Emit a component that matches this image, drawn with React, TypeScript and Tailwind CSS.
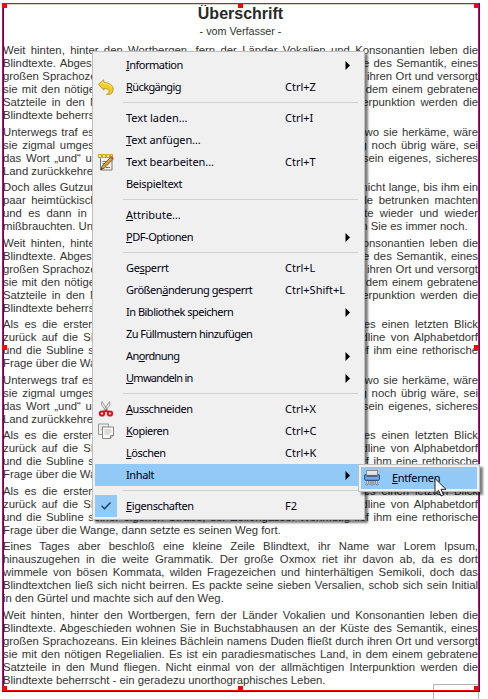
import type { ReactNode } from "react";

const weit = [
  "Weit hinten, hinter den Wortbergen, fern der Länder Vokalien und Konsonantien leben die",
  "Blindtexte. Abgeschieden wohnen Sie in Buchstabhausen an der Küste des Semantik, eines",
  "großen Sprachozeans. Ein kleines Bächlein namens Duden fließt durch ihren Ort und versorgt",
  "sie mit den nötigen Regelialien. Es ist ein paradiesmatisches Land, in dem einem gebratene",
  "Satzteile in den Mund fliegen. Nicht einmal von der allmächtigen Interpunktion werden die",
  "Blindtexte beherrscht - ein geradezu unorthographisches Leben.",
];
const unterwegs = [
  "Unterwegs traf es eine Copy. Die Copy warnte das Blindtextchen, da, wo sie herkäme, wäre",
  "sie zigmal umgeschrieben worden und alles, was von ihrem Ursprung noch übrig wäre, sei",
  "das Wort „und“ und das Blindtextchen solle umkehren und wieder in sein eigenes, sicheres",
  "Land zurückkehren.",
];
const doch = [
  "Doch alles Gutzureden konnte es nicht überzeugen und so dauerte es nicht lange, bis ihm ein",
  "paar heimtückische Werbetexter auflauerten, es mit Longe und Parole betrunken machten",
  "und es dann in ihre Agentur schleppten, wo sie es für ihre Projekte wieder und wieder",
  "mißbrauchten. Und wenn es nicht umgeschrieben wurde, dann benutzen Sie es immer noch.",
];
const als = [
  "Als es die ersten Hügel des Kursivgebirges erklommen hatte, warf es einen letzten Blick",
  "zurück auf die Skyline seiner Heimatstadt Buchstabhausen, die Headline von Alphabetdorf",
  "und die Subline seiner eigenen Straße, der Zeilengasse. Wehmütig lief ihm eine rethorische",
  "Frage über die Wange, dann setzte es seinen Weg fort.",
];
const eines = [
  "Eines Tages aber beschloß eine kleine Zeile Blindtext, ihr Name war Lorem Ipsum,",
  "hinauszugehen in die weite Grammatik. Der große Oxmox riet ihr davon ab, da es dort",
  "wimmele von bösen Kommata, wilden Fragezeichen und hinterhältigen Semikoli, doch das",
  "Blindtextchen ließ sich nicht beirren. Es packte seine sieben Versalien, schob sich sein Initial",
  "in den Gürtel und machte sich auf den Weg.",
];
const paragraphs = [weit, unterwegs, doch, weit, als, unterwegs, als, als, eines, weit];

function Paragraph({ lines }: { lines: string[] }) {
  return (
    <p className="flex flex-col">
      {lines.map((line, i) => (
        <span
          key={i}
          className={`block h-[13.05px] w-full whitespace-nowrap ${
            i < lines.length - 1 ? "[text-align-last:justify]" : ""
          }`}
        >
          {line}
        </span>
      ))}
    </p>
  );
}

function UndoIcon() {
  return (
    <svg width="16" height="16" viewBox="0 0 16 16">
      <path d="M.5 5.500 5.800.8v2.700c5.500.2 9.400 2.700 9.400 6.700 0 2.200-1 4-3 5.200H8.600c2-1.200 3-2.500 2.400-4-.6-1.400-2.500-1.900-5.200-1.900v1.700Z" fill="#f3cc22" stroke="#b08a10" strokeWidth=".8" strokeLinejoin="round" />
      <path d="M2 5.500 5 2.800v1.700c4 .2 7.400 1 8.900 4" fill="none" stroke="#fff2a0" strokeWidth=".8" />
    </svg>
  );
}

function EditIcon() {
  return (
    <svg width="16" height="17" viewBox="0 0 16 17">
      <path d="M2.500 3h11.500v13H2.500z" fill="#f5f5f0" stroke="#77776f" />
      <path d="M4.500 7.500h6M4.500 9.500h4M8 13.500h4" stroke="#777" />
      <path d="M.5.5h3v3h-3zM4.500.5h3v3h-3zM8.500.5h3v3h-3zM12.500.5h2v3h-2z" fill="#eee8b0" stroke="#cda900" />
      <path d="m3 15.500 1-3.300 8.700-9.200 2.300 2.200-8.700 9Z" fill="#d89b3c" stroke="#6b4a20" strokeWidth=".8" />
      <path d="m12.300 3.400 1.300-1.400 2.200 2.200-1.300 1.300Z" fill="#e03c3c" />
      <path d="m3 15.500.5-1.700 1.200 1.100Z" fill="#222" />
    </svg>
  );
}

function CutIcon() {
  return (
    <svg width="16" height="16" viewBox="0 0 16 16">
      <path d="M4 .5c-1 1.800-.5 3.500.8 5.100L8.700 11l1.300-1.500ZM11.500.5c1 1.800.5 3.500-.8 5.100L6.800 11 5.500 9.500Z" fill="#e8e8e6" stroke="#8b8d89" strokeWidth=".8" />
      <g fill="none" stroke="#d0161d" strokeWidth="2">
        <ellipse cx="4" cy="12.500" rx="2.200" ry="2.100" />
        <ellipse cx="12" cy="12.500" rx="2.200" ry="2.100" />
        <path d="M5.800 11.200 8 9.500l2.200 1.700" />
      </g>
    </svg>
  );
}

function CopyIcon() {
  return (
    <svg width="16" height="16" viewBox="0 0 16 16">
      <path d="M.5 1h10v10.500H.5z" fill="#f0f0ef" stroke="#969793" />
      <path d="M2.500 4h5M2.500 6.500h5" stroke="#c5c5c3" />
      <path d="M4.500 4h11v8.500l-3 3h-8z" fill="#fafafa" stroke="#858682" />
      <path d="M12.500 15.500v-3h3" fill="#ddd" stroke="#858682" />
      <path d="M6.500 7h7M6.500 9h7M6.500 11h5" stroke="#bcbcba" />
    </svg>
  );
}

function ShredIcon() {
  return (
    <svg width="16" height="16" viewBox="0 0 16 16">
      <path d="M3.500 9v4.500L2 15M5.800 9v5.500M8 9v6.500M10.200 9v5.500M12.500 9v4.500L14 15" fill="none" stroke="#707274" strokeWidth="1.900" />
      <path d="M3.500 9v4.500L2.300 14.600M5.800 9v5M8 9v6M10.200 9v5M12.500 9v4.500l1.200 1.100" fill="none" stroke="#ececec" strokeWidth=".8" />
      <path d="M.5 5 2 4.500h12l1.500.5v4.500l-1.500 1H2l-1.500-1z" fill="#5c94d8" stroke="#2c5590" />
      <path d="M2.500.5h11v4.800h-11z" fill="#e6e6e4" stroke="#888886" />
      <path d="M2.500 6h11" stroke="#3b3f45" />
      <path d="M1.200 8h13.600" stroke="#8db8ea" />
    </svg>
  );
}

type Entry = { label: ReactNode; t: string; keys?: string; sub?: boolean; icon?: ReactNode; active?: boolean; checked?: boolean };

const groups: Entry[][] = [
  [
    { label: <><u>I</u>nformation</>, t: "tracking-[-0.5px]", sub: true },
    { label: <><u>R</u>ückgängig</>, t: "tracking-[-0.6px]", keys: "Ctrl+Z", icon: <UndoIcon /> },
  ],
  [
    { label: "Text laden…", t: "tracking-[0px]", keys: "Ctrl+I" },
    { label: <><u>T</u>ext anfügen…</>, t: "tracking-[-0.1px]" },
    { label: "Text bearbeiten…", t: "tracking-[-0.08px]", keys: "Ctrl+T", icon: <EditIcon /> },
    { label: "Beispieltext", t: "tracking-[-0.3px]" },
  ],
  [
    { label: <><u>A</u>ttribute…</>, t: "tracking-[0px]" },
    { label: <><u>P</u>DF-Optionen</>, t: "tracking-[-0.45px]", sub: true },
  ],
  [
    { label: <>Ge<u>s</u>perrt</>, t: "tracking-[-0.35px]", keys: "Ctrl+L" },
    { label: <>Größen<u>ä</u>nderung gesperrt</>, t: "tracking-[-0.46px]", keys: "Ctrl+Shift+L" },
    { label: "In Bibliothek speichern", t: "tracking-[-0.5px]", sub: true },
    { label: "Zu Füllmustern hinzufügen", t: "tracking-[-0.53px]" },
    { label: <>An<u>o</u>rdnung</>, t: "tracking-[-0.6px]", sub: true },
    { label: <><u>U</u>mwandeln in</>, t: "tracking-[-0.7px]", sub: true },
  ],
  [
    { label: <><u>A</u>usschneiden</>, t: "tracking-[-0.45px]", keys: "Ctrl+X", icon: <CutIcon /> },
    { label: <><u>K</u>opieren</>, t: "tracking-[-0.5px]", keys: "Ctrl+C", icon: <CopyIcon /> },
    { label: <><u>L</u>öschen</>, t: "tracking-[-0.45px]", keys: "Ctrl+K" },
    { label: "Inhalt", t: "tracking-[-0.37px]", sub: true, active: true },
  ],
  [{ label: <><u>E</u>igenschaften</>, t: "tracking-[-0.41px]", keys: "F2", checked: true }],
];

function Row({ e }: { e: Entry }) {
  return (
    <div className={`flex h-[22px] items-center ${e.active ? "bg-[#91c9f7]" : ""}`}>
      <div className={`flex h-[22px] w-[22px] shrink-0 items-center justify-center ${e.checked ? "bg-[#91c9f7]" : ""}`}>
        {e.icon}
        {e.checked && (
          <svg width="12" height="10" viewBox="0 0 12 10">
            <path d="m1.500 4.800 3 3L10.500 1.500" fill="none" stroke="#183d5c" strokeWidth="1.400" />
          </svg>
        )}
      </div>
      <span className={`ml-[9px] w-[159px] shrink-0 whitespace-nowrap ${e.t}`}>{e.label}</span>
      <span className="flex-1 whitespace-nowrap">{e.keys}</span>
      {e.sub && (
        <svg className="mr-[12px]" width="5" height="9" viewBox="0 0 5 9">
          <path d="M.5 0v9L5 4.500z" fill="#000" />
        </svg>
      )}
    </div>
  );
}

export default function App() {
  return (
    <div className="relative h-[699px] w-[488px] overflow-hidden bg-white">
      <main className="pt-[3.2px] pl-[3px] font-['Liberation_Sans',Arial,sans-serif] text-[#333]">
        <div className="w-[475px] text-[11.33px] leading-[13.05px]">
          <h1 className="h-[20px] text-center text-[16px] leading-[21px] font-bold text-[#2a2a2a]">Überschrift</h1>
          <p className="mb-[5px] h-[16px] text-center text-[10.75px] leading-[17px]">- vom Verfasser -</p>
          <div className="flex flex-col gap-[3.3px]">
            {paragraphs.map((lines, i) => (
              <Paragraph key={i} lines={lines} />
            ))}
          </div>
        </div>
      </main>

      <div className="absolute top-[684px] left-[433px] h-[20px] w-[46px] border border-[#b4b4b4]" />
      <div className="absolute top-[3px] left-[2px] h-[689px] w-[478px] border-r border-b border-[#2a10b8]">
        <div className="h-full border border-[#f00]">
          <div className="h-full border-t border-l border-t-[#e0d0d0] border-l-[#2a10b8]" />
        </div>
      </div>
      {["top-[3px]", "top-[345px]", "top-[686px]"].map((y, r) =>
        ["left-[2px]", "left-[238px]", "left-[474px]"].map((x, c) =>
          r === 1 && c === 1 ? null : <i key={x + y} className={`absolute size-[5px] bg-[#f00] ${x} ${y}`} />,
        ),
      )}

      <nav className="absolute top-[51px] left-[92px] w-[273px] border border-[#bfbfbf] bg-[#f0f0f0] p-[2px] font-['Noto_Sans',sans-serif] text-[11px] text-[#000010] shadow-[3px_3px_2px_rgba(0,0,0,0.5)]">
        {groups.map((g, i) => (
          <div key={i}>
            {i > 0 && (
              <div className="flex h-[9px] items-center pr-[4px] pl-[28px]">
                <hr className="w-full border-[#d0d0d0]" />
              </div>
            )}
            {g.map((e, j) => (
              <Row key={j} e={e} />
            ))}
          </div>
        ))}
      </nav>

      <div className="absolute top-[464px] left-[358px] flex h-[28px] w-[122px] border border-[#bfbfbf] bg-[#f0f0f0] p-[2px] font-['Noto_Sans',sans-serif] text-[11px] text-[#000010] shadow-[3px_3px_2px_rgba(0,0,0,0.5)]">
        <div className="flex flex-1 items-center bg-[#91c9f7] pl-[3px]">
          <ShredIcon />
          <span className="ml-[12px] tracking-[-0.35px]"><u>E</u>ntfernen</span>
        </div>
      </div>
      <svg className="absolute top-[477px] left-[434px]" width="14" height="21" viewBox="0 0 14 21">
        <path d="M1 1.500v15l3.500-3.300 2.500 5.800 2.500-1-2.500-5.700h5z" fill="#fff" stroke="#222" />
      </svg>
    </div>
  );
}
